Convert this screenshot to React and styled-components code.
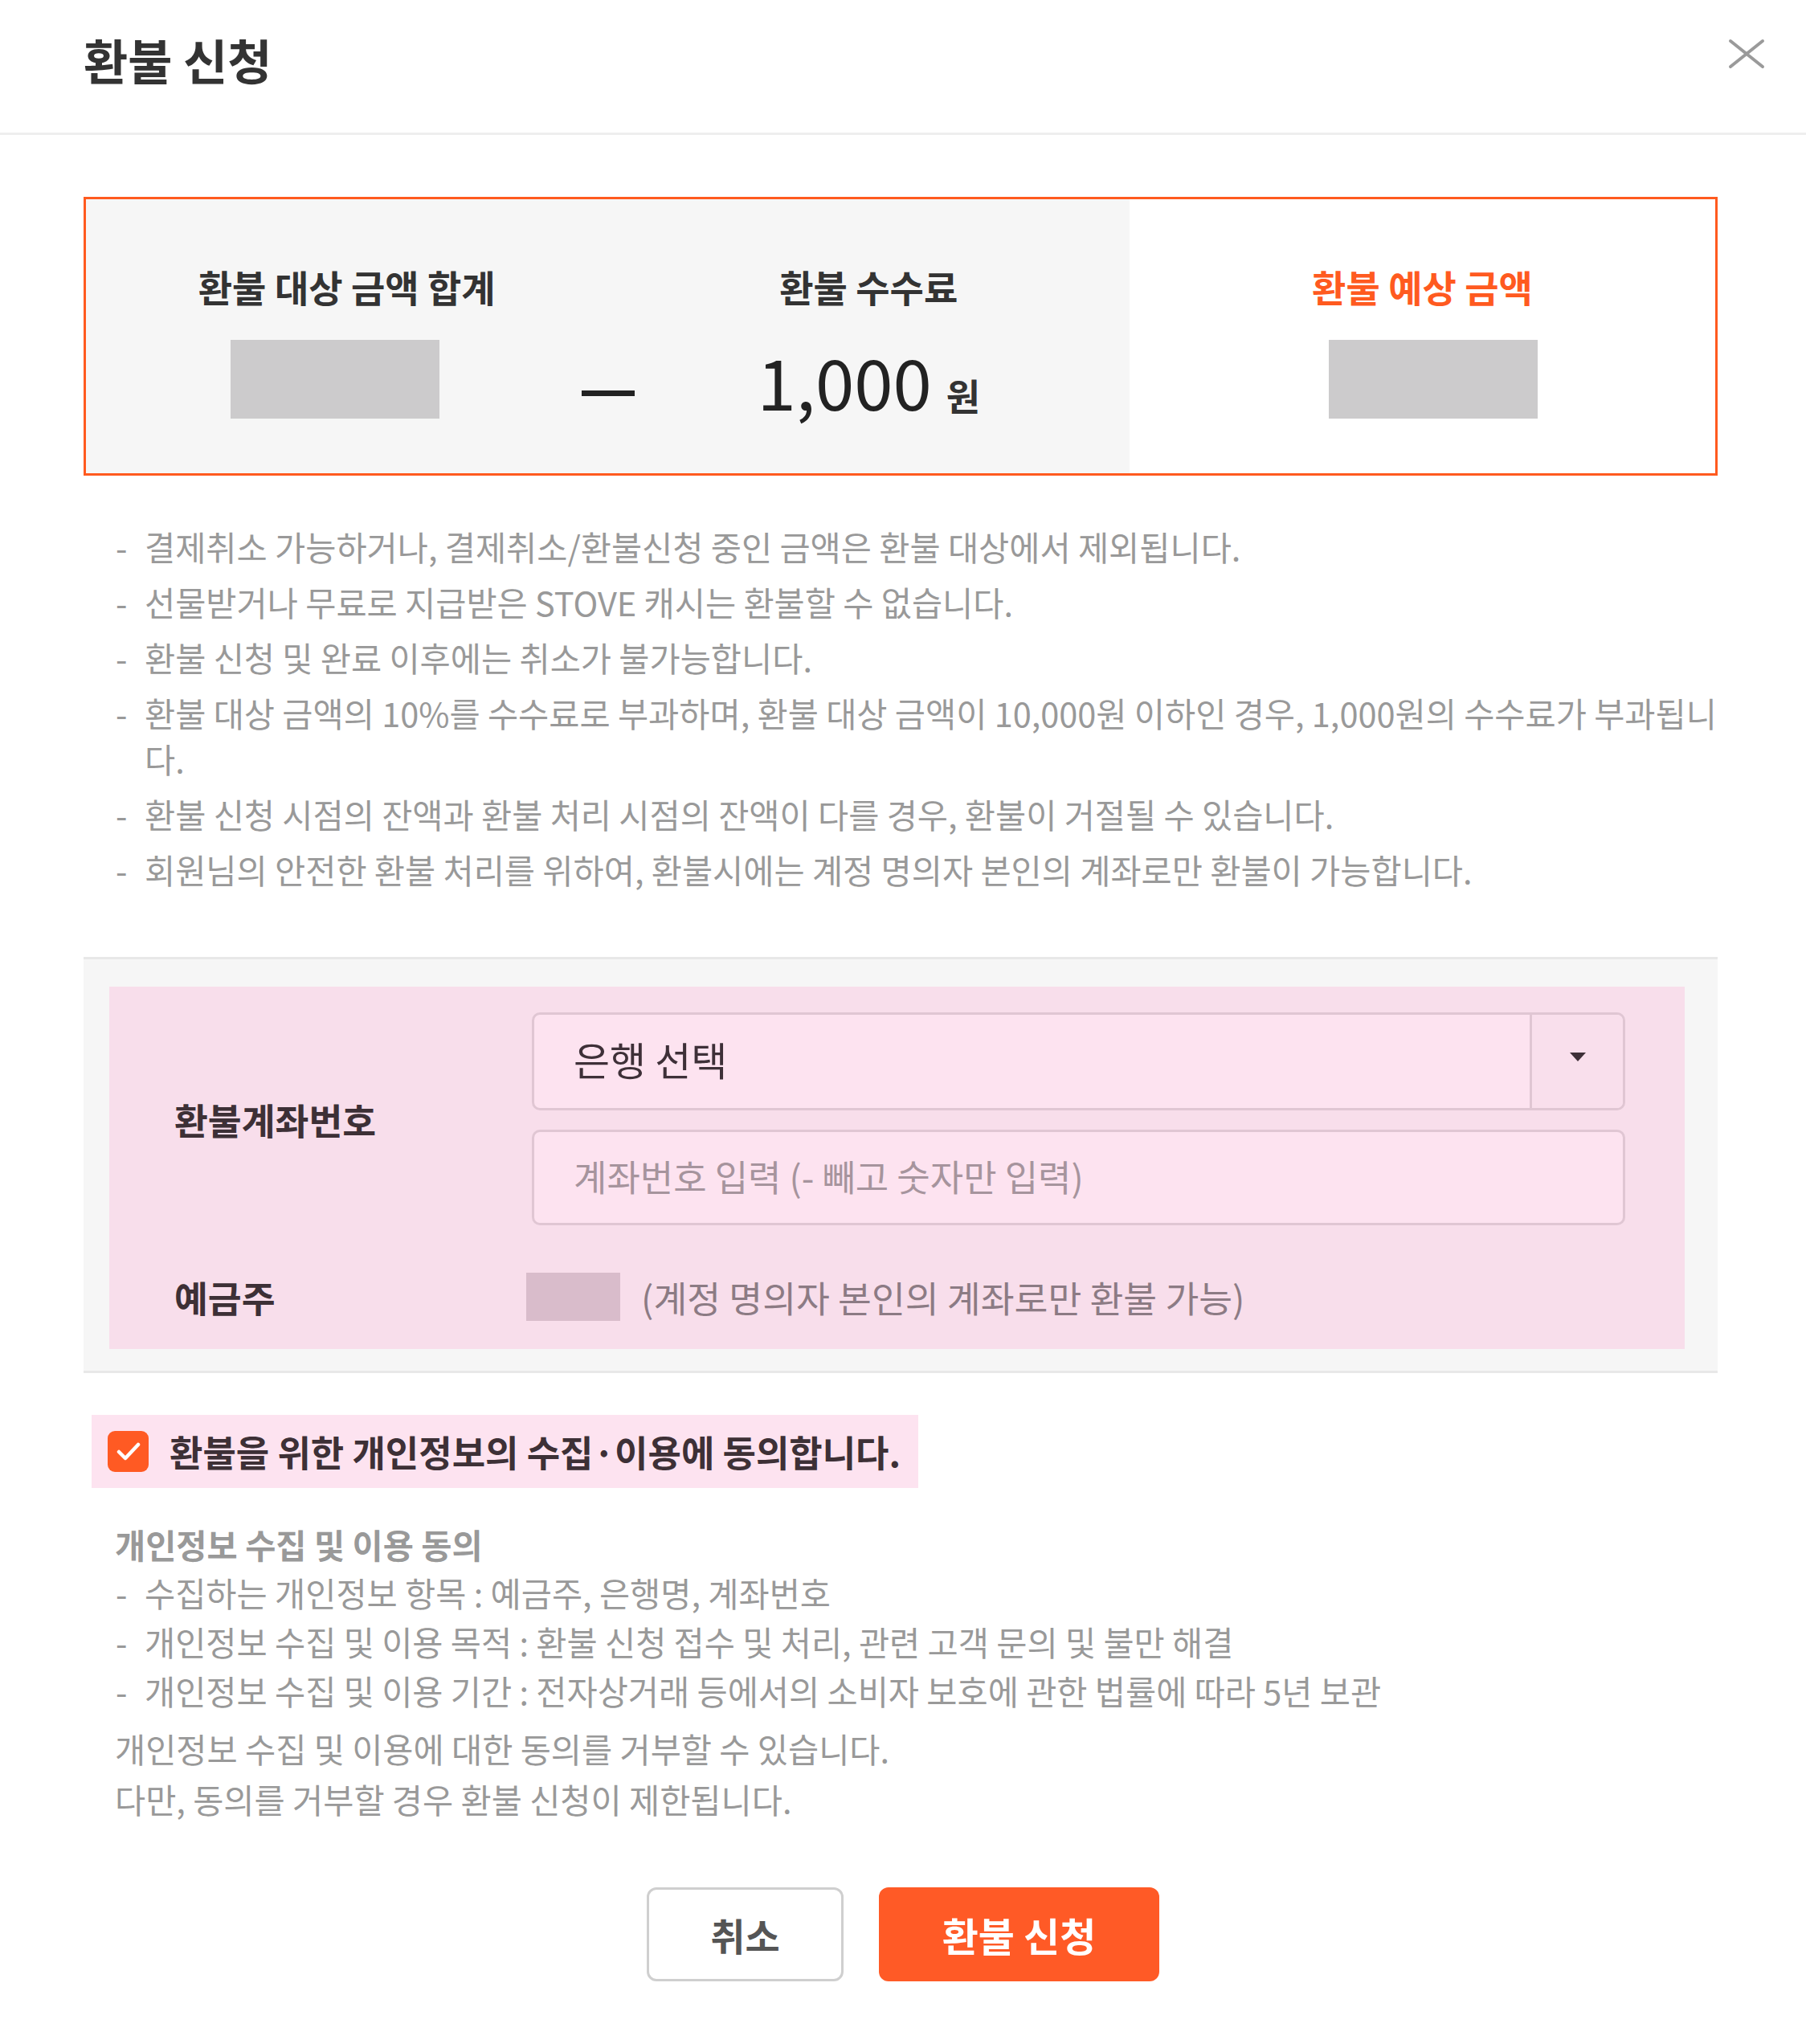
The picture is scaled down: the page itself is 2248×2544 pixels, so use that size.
import React from 'react'
import styled, { createGlobalStyle } from 'styled-components'

const notices = [
    '결제취소 가능하거나, 결제취소/환불신청 중인 금액은 환불 대상에서 제외됩니다.',
    '선물받거나 무료로 지급받은 STOVE 캐시는 환불할 수 없습니다.',
    '환불 신청 및 완료 이후에는 취소가 불가능합니다.',
    '환불 대상 금액의 10%를 수수료로 부과하며, 환불 대상 금액이 10,000원 이하인 경우, 1,000원의 수수료가 부과됩니다.',
    '환불 신청 시점의 잔액과 환불 처리 시점의 잔액이 다를 경우, 환불이 거절될 수 있습니다.',
    '회원님의 안전한 환불 처리를 위하여, 환불시에는 계정 명의자 본인의 계좌로만 환불이 가능합니다.',
]

const privacyItems = [
    '수집하는 개인정보 항목 : 예금주, 은행명, 계좌번호',
    '개인정보 수집 및 이용 목적 : 환불 신청 접수 및 처리, 관련 고객 문의 및 불만 해결',
    '개인정보 수집 및 이용 기간 : 전자상거래 등에서의 소비자 보호에 관한 법률에 따라 5년 보관',
]

function App() {
    return (
        <>
            <GlobalStyle />
            <Modal>
                <Header>
                    <Title>환불 신청</Title>
                    <CloseButton aria-label="닫기">
                        <svg width="46" height="38" viewBox="0 0 46 38">
                            <path d="M3 3 L43 35 M43 3 L3 35" stroke="#9a9a9a" strokeWidth="4" strokeLinecap="round" />
                        </svg>
                    </CloseButton>
                </Header>

                <Body>
                    <Summary>
                        <FeeGroup>
                            <Column $padLeft={33}>
                                <Label>환불 대상 금액 합계</Label>
                                <ValueRow>
                                    <Blank $shift={-15} />
                                </ValueRow>
                            </Column>
                            <MinusCell>
                                <Minus />
                            </MinusCell>
                            <Column $padRight={33}>
                                <Label>환불 수수료</Label>
                                <ValueRow>
                                    <AmountLine>
                                        <Amount>1,000</Amount>
                                        <Unit>원</Unit>
                                    </AmountLine>
                                </ValueRow>
                            </Column>
                        </FeeGroup>
                        <Column>
                            <Label $accent>환불 예상 금액</Label>
                            <ValueRow>
                                <Blank $shift={13} />
                            </ValueRow>
                        </Column>
                    </Summary>

                    <NoticeList>
                        {notices.map((text) => (
                            <NoticeItem key={text}>
                                <Dash>-</Dash>
                                <ItemText>{text}</ItemText>
                            </NoticeItem>
                        ))}
                    </NoticeList>

                    <AccountPanel>
                        <Highlight>
                            <FieldRow>
                                <FieldLabel>환불계좌번호</FieldLabel>
                                <FieldStack>
                                    <Select>
                                        <SelectText>은행 선택</SelectText>
                                        <SelectArrow>
                                            <svg width="20" height="11" viewBox="0 0 20 11">
                                                <path d="M0 0 H20 L10 11 Z" fill="#3e3038" />
                                            </svg>
                                        </SelectArrow>
                                    </Select>
                                    <TextInput placeholder="계좌번호 입력 (- 빼고 숫자만 입력)" readOnly />
                                </FieldStack>
                            </FieldRow>
                            <DepositorRow>
                                <FieldLabel>예금주</FieldLabel>
                                <OwnerValue>
                                    <OwnerBlank />
                                    <OwnerNote>(계정 명의자 본인의 계좌로만 환불 가능)</OwnerNote>
                                </OwnerValue>
                            </DepositorRow>
                        </Highlight>
                    </AccountPanel>

                    <AgreeRow>
                        <CheckBox>
                            <svg width="30" height="24" viewBox="0 0 30 24">
                                <path d="M3 12 L11 20 L27 3" fill="none" stroke="#fff" strokeWidth="4.5" strokeLinecap="round" strokeLinejoin="round" />
                            </svg>
                        </CheckBox>
                        <AgreeText>환불을 위한 개인정보의 수집·이용에 동의합니다.</AgreeText>
                    </AgreeRow>

                    <Privacy>
                        <PrivacyTitle>개인정보 수집 및 이용 동의</PrivacyTitle>
                        {privacyItems.map((text) => (
                            <PrivacyItem key={text}>
                                <Dash>-</Dash>
                                <span>{text}</span>
                            </PrivacyItem>
                        ))}
                        <PrivacyNote>
                            개인정보 수집 및 이용에 대한 동의를 거부할 수 있습니다.
                            <br />
                            다만, 동의를 거부할 경우 환불 신청이 제한됩니다.
                        </PrivacyNote>
                    </Privacy>

                    <Actions>
                        <CancelButton>취소</CancelButton>
                        <SubmitButton>환불 신청</SubmitButton>
                    </Actions>
                </Body>
            </Modal>
        </>
    )
}

export default App

const GlobalStyle = createGlobalStyle`
    body {
        margin: 0;
        background: #fff;
        font-family: "Noto Sans CJK KR", "Noto Sans", sans-serif;
    }
    * { box-sizing: border-box; }
`
const Modal = styled.div`
    width: 2248px;
    min-height: 2544px;
    background: #fff;
`
const Header = styled.div`
    height: 168px;
    display: flex;
    justify-content: space-between;
    align-items: flex-start;
    padding: 36px 51px 0 104px;
    border-bottom: 3px solid #eeeeee;
`
const Title = styled.h1`
    margin: 0;
    font-size: 60px;
    line-height: 76px;
    font-weight: 700;
    color: #333;
`
const CloseButton = styled.button`
    margin-top: 12px;
    padding: 0;
    border: 0;
    background: none;
    display: flex;
`
const Body = styled.div`
    padding: 0 110px 0 104px;
`
const Summary = styled.div`
    margin-top: 77px;
    height: 347px;
    border: 3px solid #ff5a1f;
    display: grid;
    grid-template-columns: 1299px 1fr;
`
const FeeGroup = styled.div`
    background: #f6f6f6;
    display: grid;
    grid-template-columns: 1fr 66px 1fr;
`
const Column = styled.div`
    display: flex;
    flex-direction: column;
    align-items: center;
    padding-top: 76px;
    padding-left: ${props => props.$padLeft || 0}px;
    padding-right: ${props => props.$padRight || 0}px;
`
const Label = styled.div`
    font-size: 46px;
    line-height: 64px;
    font-weight: 700;
    color: ${props => props.$accent ? '#ff5a1f' : '#333'};
`
const ValueRow = styled.div`
    margin-top: 35px;
    height: 130px;
    display: flex;
    align-items: flex-start;
    justify-content: center;
`
const Blank = styled.div`
    width: 260px;
    height: 98px;
    background: #cccbcc;
    transform: translateX(${props => props.$shift || 0}px);
`
const AmountLine = styled.div`
    margin-top: 7px;
    display: flex;
    align-items: baseline;
`
const Amount = styled.span`
    font-size: 87px;
    line-height: 87px;
    color: #222;
`
const Unit = styled.span`
    margin-left: 18px;
    font-size: 46px;
    font-weight: 700;
    color: #333;
`
const MinusCell = styled.div`
    padding-top: 238px;
`
const Minus = styled.div`
    width: 66px;
    height: 7px;
    background: #222;
`
const NoticeList = styled.ul`
    list-style: none;
    margin: 60px -8px 0 0;
    padding: 0;
`
const NoticeItem = styled.li`
    display: flex;
    font-size: 41.5px;
    line-height: 57px;
    color: #999;
    margin-bottom: 12px;
`
const Dash = styled.span`
    flex: none;
    width: 36px;
    padding-left: 40px;
    box-sizing: content-box;
`
const ItemText = styled.span`
    flex: 1;
`
const AccountPanel = styled.div`
    margin-top: 80px;
    background: #f6f6f6;
    border-top: 3px solid #e8e8e8;
    border-bottom: 3px solid #e8e8e8;
    padding: 34px 41px 27px 32px;
`
const Highlight = styled.div`
    background: #f8deeb;
    padding: 32px 74px 38px 81px;
`
const FieldRow = styled.div`
    display: grid;
    grid-template-columns: 445px 1fr;
    align-items: center;
`
const FieldLabel = styled.div`
    font-size: 45.5px;
    font-weight: 700;
    color: #3d3036;
`
const FieldStack = styled.div`
    display: flex;
    flex-direction: column;
    gap: 24px;
`
const Select = styled.div`
    height: 122px;
    display: flex;
    border: 3px solid #e0c6d3;
    border-radius: 10px;
    background: #fde3f0;
`
const SelectText = styled.div`
    flex: 1;
    display: flex;
    align-items: center;
    padding: 0 0 8px 49px;
    font-size: 49px;
    color: #3e3038;
`
const SelectArrow = styled.div`
    width: 116px;
    display: flex;
    align-items: center;
    justify-content: center;
    padding-bottom: 12px;
    border-left: 3px solid #e0c6d3;
    background: #f9dfec;
    border-radius: 0 8px 8px 0;
`
const TextInput = styled.input`
    height: 119px;
    width: 100%;
    border: 3px solid #e0c6d3;
    border-radius: 10px;
    background: #fde3f0;
    padding: 0 0 5px 49px;
    font-family: inherit;
    font-size: 45px;
    outline: none;
    &::placeholder {
        color: #a6949d;
    }
`
const DepositorRow = styled(FieldRow)`
    margin-top: 56px;
    height: 60px;
`
const OwnerValue = styled.div`
    display: flex;
    align-items: center;
    margin-left: -7px;
`
const OwnerBlank = styled.div`
    width: 117px;
    height: 60px;
    background: #d9bccb;
`
const OwnerNote = styled.span`
    margin-left: 26px;
    font-size: 45.5px;
    color: #8c7b84;
`
const AgreeRow = styled.div`
    margin: 52px 0 0 10px;
    height: 91px;
    display: inline-flex;
    align-items: center;
    padding: 0 22px 0 20px;
    background: #fde3f0;
`
const CheckBox = styled.div`
    width: 51px;
    height: 51px;
    border-radius: 9px;
    background: #ff5a23;
    display: flex;
    align-items: center;
    justify-content: center;
`
const AgreeText = styled.span`
    margin-left: 26px;
    font-size: 45px;
    font-weight: 700;
    color: #3d3036;
`
const Privacy = styled.div`
    margin-top: 40px;
    color: #999;
    font-size: 41.5px;
`
const PrivacyTitle = styled.div`
    padding-left: 39px;
    line-height: 60px;
    font-weight: 700;
`
const PrivacyItem = styled.div`
    display: flex;
    line-height: 61px;
`
const PrivacyNote = styled.p`
    margin: 10px 0 0;
    padding-left: 39px;
    line-height: 63px;
`
const Actions = styled.div`
    margin-top: 78px;
    display: flex;
    justify-content: center;
    gap: 44px;
    padding-left: 6px;
`
const CancelButton = styled.button`
    width: 245px;
    height: 117px;
    border: 3px solid #cfcfcf;
    border-radius: 12px;
    background: #fff;
    font-family: inherit;
    font-size: 47px;
    font-weight: 700;
    color: #555;
`
const SubmitButton = styled.button`
    width: 349px;
    height: 117px;
    border: 0;
    border-radius: 12px;
    background: #ff5a26;
    font-family: inherit;
    font-size: 49px;
    font-weight: 700;
    color: #fff;
`
